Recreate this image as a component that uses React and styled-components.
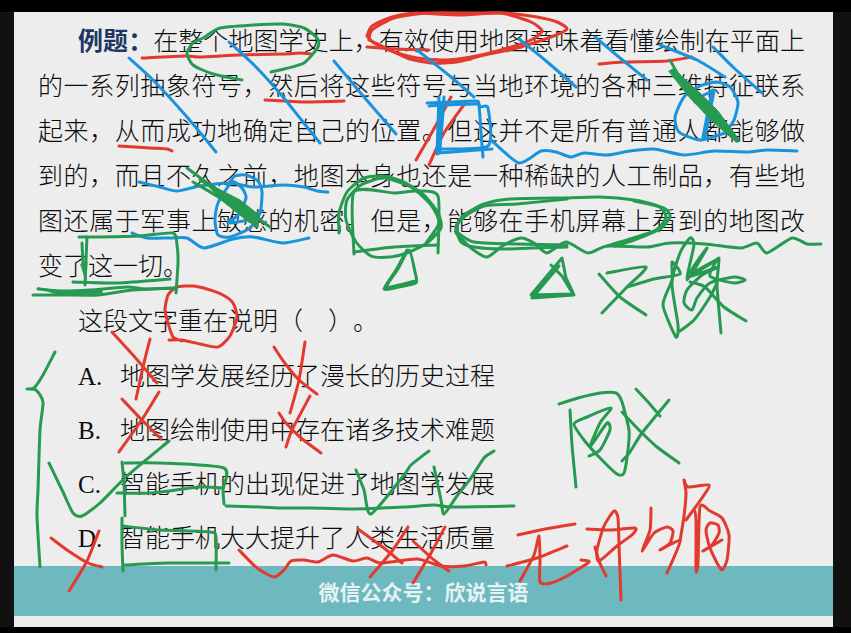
import React from "react";
import styled, { createGlobalStyle } from "styled-components";

const GlobalStyle = createGlobalStyle`
  * { box-sizing: border-box; }
  body { margin: 0; background: #000; }
`;

const Stage = styled.main`
  position: relative;
  display: flex;
  flex-direction: column;
  min-height: 100vh;
  padding: 12px 0 6px;
  background: #000;
`;

const Backdrop = styled.div`
  display: flex;
  flex: 1;
  padding: 0 18px 0 14px;
  background: #111;
`;

const Slide = styled.article`
  display: flex;
  flex: 1;
  flex-direction: column;
  padding-bottom: 11px;
  background: #ededed;
  color: #0c0c0c;
  font-family: "Liberation Serif", "Noto Sans CJK SC", serif;
  font-size: 25px;
  font-weight: 300;
  text-spacing-trim: space-all;
`;

const Content = styled.section`
  flex: 1;
  padding: 7px 28px 0 24px;
`;

const Passage = styled.p`
  margin: 0;
  line-height: 45px;
  text-align: justify;
  text-indent: 40px;
`;

const Lead = styled.strong`
  color: #1f3564;
  font-weight: 700;
`;

const Question = styled.p`
  margin: 6px 0 0;
  padding-left: 40px;
  line-height: 54px;
  white-space: pre;
`;

const Options = styled.ol`
  margin: 1px 0 0;
  padding: 0 0 0 40px;
  list-style: none;
`;

const Option = styled.li`
  display: grid;
  grid-template-columns: 42px 1fr;
  line-height: 54px;
`;

const Banner = styled.footer`
  padding: 0 16px;
  background: #6db9bf;
  color: #e4f2f3;
  font-family: "Noto Sans CJK SC", sans-serif;
  font-size: 21px;
  font-weight: 700;
  line-height: 50px;
  text-align: center;
`;

const Ink = styled.svg`
  position: absolute;
  inset: 0;
  width: 100%;
  height: 100%;
  pointer-events: none;
`;

const Pen = styled.g`
  fill: none;
  stroke: ${(p) => p.$color};
  stroke-width: 3;
  stroke-linecap: round;
  stroke-linejoin: round;
`;

const Marker = styled.path`
  stroke-width: 5;
`;

const Blot = styled.path`
  fill: ${(p) => p.$color};
  stroke-width: 1;
`;

const RED = "#e33a2f";
const BLUE = "#1893dc";
const GREEN = "#279a52";

const options = [
  ["A.", "地图学发展经历了漫长的历史过程"],
  ["B.", "地图绘制使用中存在诸多技术难题"],
  ["C.", "智能手机的出现促进了地图学发展"],
  ["D.", "智能手机大大提升了人类生活质量"],
];

/* Pen strokes as point lists; each is drawn as a smooth curve through its points. */
const redStrokes = [
  "142,58 185,56 200,57 240,55 283,54 300,53 311,54",
  "367,47 397,49 429,50",
  "367,36 371,27 384,20 400,15 417,13 461,15 501,13 531,22 542,31 531,40 501,50 471,57 444,60 417,58 394,52 374,43 367,36",
  "369,40 372,30 394,18 427,13 470,13 505,13 537,17 557,22 567,29 551,37 517,48 484,55 457,62 431,63 407,58 384,47 369,40",
  "426,59 448,61 471,59",
  "599,64 624,62 667,61 692,57",
  "265,100 284,101 304,102 344,101",
  "119,146 150,148 167,149 172,151",
  "451,97 435,127 416,160",
  "466,102 444,133 429,165",
  "169,340 182,340 200,344 218,347 230,336 237,317 233,303 223,295 207,289 193,286 177,287 168,295 165,310 168,323 173,337 182,341",
  "112,332 133,355 157,383",
  "150,339 143,367 136,399",
  "122,399 140,418 161,439",
  "159,392 143,418 119,452",
  "274,347 284,362 299,380 317,394",
  "305,342 299,380 290,413",
  "279,413 286,423 301,438 321,453",
  "310,396 292,430 286,447",
  "51,538 67,550 88,563 102,567",
  "99,531 87,561 69,591",
  "239,550 257,568 274,577 284,570 291,561 304,560 318,562 333,555 353,561 367,558 381,563 417,559 441,566 464,566 484,562 486,565",
  "358,529 384,548 402,563",
  "408,527 392,551 370,577",
  "413,541 434,560 449,571",
  "445,527 431,553 413,583",
  "518,535 545,529 575,524",
  "507,566 537,558 567,546",
  "520,581 534,555 539,536 540,560 540,582 551,583 567,576 589,562 581,560",
  "595,547 599,561 606,576",
  "587,529 610,530 635,528 633,534 617,546 599,561 597,550 604,526 614,511 618,518 619,545 621,600",
  "651,508 650,530 642,551 654,533 667,527 673,531 670,543 660,550 680,541 667,573",
  "680,541 684,516 686,493 684,480 688,487 709,485 702,498 686,520 694,510 696,520 696,570 698,563 700,507 710,511 722,518 729,535 727,560 722,570 717,563 709,545 706,530 710,523 718,525 719,533 712,545 703,551 722,540",
];

const blueStrokes = [
  "129,58 153,80 187,117 216,152",
  "229,42 256,67 283,97 303,122 320,143",
  "334,61 364,97 396,134",
  "417,50 451,77 474,97",
  "519,39 545,60 576,87",
  "595,37 620,58 647,80",
  "660,45 697,60 725,77",
  "713,47 734,68 762,93",
  "427,103 450,102 476,101 479,105 481,133 483,157",
  "439,97 438,125 437,154",
  "444,97 442,125 439,153",
  "429,106 445,105 477,104 480,107 488,108 488,146 437,149",
  "437,153 465,151 492,149",
  "491,140 519,163 541,151 556,152 571,157 584,153 607,155 630,151 654,149 684,155 714,151 747,152 767,150 797,151",
  "725,133 700,140 679,132 675,117 684,97 700,86 717,82 730,87 738,102 734,120 726,131",
  "695,102 704,95 713,91",
  "139,182 160,187 177,191 200,186 230,183 253,187 283,185 304,187 317,191 328,192",
  "230,182 235,176 246,175 258,181 262,192 260,213 250,228 230,237 218,235 215,220 218,203 232,182 242,188 246,198 238,215 228,223 247,220 258,213",
  "132,233 147,238 170,238 187,238 204,248 233,239 253,237 283,243 309,238",
];

const greenStrokes = [
  "242,80 213,74 193,65 187,53 193,43 203,38 220,28 253,25 283,24 304,28 317,38 318,47 304,63 284,69 271,72",
  "670,60 678,74 690,86",
  "187,168 213,187 257,215",
  "193,182 220,198 247,218",
  "200,180 235,202 270,227",
  "79,237 100,237 140,236 173,233 177,245 178,263 176,293",
  "87,237 86,260 85,285",
  "82,243 83,262 85,275",
  "73,282 117,283 170,279",
  "38,289 60,291 90,290 127,287 145,289 176,288",
  "33,295 65,295 98,295 133,290 176,288",
  "339,233 339,213 347,192 364,178 384,176 404,182 424,195 438,213 441,228 427,243 407,253 390,257 371,256 356,242 346,220 347,200 361,185 384,178 411,187 431,205 439,223 426,243",
  "354,254 354,192 394,193 416,191 438,196 438,253",
  "354,252 394,247 438,245",
  "407,250 396,270 384,289 399,287 416,283 415,272 409,250 398,269 387,287 415,281",
  "567,198 511,199 484,204 464,215 456,227 461,242 474,247 504,249 567,247",
  "567,199 517,204 484,206 463,218 456,230 474,242 517,244 567,245",
  "567,198 600,197 634,200 658,206 666,217 656,230 630,239 607,246",
  "634,201 664,208 670,217 660,229 634,240 615,246",
  "456,233 471,248 487,257 504,245 521,238 534,243 547,253 566,242 588,253 607,246 647,247 670,243 705,244 740,248 757,243 767,253 792,238 807,244 821,244",
  "607,273 646,267 627,287 602,313",
  "599,274 620,297 646,315",
  "627,287 654,279 680,274 672,262 672,280 663,305 676,337 678,325 672,283 680,253 690,238 694,245 687,280 707,248 690,273 718,259 691,276 718,267 702,275 687,290 684,303 692,310 697,298 710,283 734,277 745,280 734,283 710,276 719,258 717,285 721,333",
  "690,282 705,287 724,307 746,321",
  "717,283 710,297 694,320 680,331",
  "559,404 578,398 600,393 616,393 622,402 629,430 628,450 624,473 617,474 600,458 584,440 574,424 587,417 611,408 600,423 590,447 607,423 610,430 600,450 589,456",
  "570,410 572,445 576,487",
  "636,389 648,402 660,416",
  "669,400 642,433 630,452 622,461",
  "622,412 640,431 657,447 679,463",
  "55,352 43,375 34,388 27,389 36,390 43,402 40,430 38,490 37,516 40,567",
  "49,463 62,490 73,513 82,516 100,503 127,476 169,441",
  "125,463 160,463 224,468 223,490 224,504",
  "122,462 124,483 125,516",
  "117,493 150,493 200,487 223,488",
  "226,506 260,507 283,508 311,508 350,509 404,507 434,505 451,507 514,506",
  "434,467 441,500 444,514 457,496 471,478 484,458 494,451",
  "356,470 364,490 371,514 404,475 411,465 429,451",
  "122,518 122,545 123,571",
  "123,526 160,530 210,532 216,537 216,570",
  "125,565 167,563 229,563",
];

function smooth(points) {
  const p = points.split(" ").map((pair) => pair.split(",").map(Number));
  let d = `M${p[0]}`;
  for (let i = 0; i < p.length - 1; i += 1) {
    const before = p[i - 1] || p[i];
    const from = p[i];
    const to = p[i + 1];
    const after = p[i + 2] || to;
    const c1 = from.map((v, k) => v + (to[k] - before[k]) / 9);
    const c2 = to.map((v, k) => v - (after[k] - from[k]) / 9);
    d += `C${c1} ${c2} ${to}`;
  }
  return d;
}

function Strokes({ color, list, children }) {
  return (
    <Pen $color={color}>
      {list.map((points) => (
        <path key={points} d={smooth(points)} />
      ))}
      {children}
    </Pen>
  );
}

export default function App() {
  return (
    <Stage lang="zh-CN">
      <GlobalStyle />
      <Backdrop>
        <Slide>
          <Content>
            <Passage>
              <Lead>例题：</Lead>
              在整个地图学史上，有效使用地图意味着看懂绘制在平面上的一系列抽象符号，然后将这些符号与当地环境的各种三维特征联系起来，从而成功地确定自己的位置。但这并不是所有普通人都能够做到的，而且不久之前，地图本身也还是一种稀缺的人工制品，有些地图还属于军事上敏感的机密。但是，能够在手机屏幕上看到的地图改变了这一切。
            </Passage>
            <Question>这段文字重在说明（　）。</Question>
            <Options>
              {options.map(([label, text]) => (
                <Option key={label}>
                  <span>{label}</span>
                  <span>{text}</span>
                </Option>
              ))}
            </Options>
          </Content>
          <Banner>微信公众号：欣说言语</Banner>
        </Slide>
      </Backdrop>
      <Ink viewBox="0 0 851 633" preserveAspectRatio="xMidYMin meet" aria-hidden="true">
        <Strokes color={RED} list={redStrokes} />
        <Strokes color={BLUE} list={blueStrokes}>
          <Marker d="M713 91L704 137" />
          <Marker d="M440 104L439 152" />
        </Strokes>
        <Strokes color={GREEN} list={greenStrokes}>
          <Blot $color={GREEN} d="M669 71L673 69L700 93L718 111L740 141L736 142L712 121L690 98Z" />
          <Blot $color={GREEN} d="M203 181L215 187L240 200L259 215L258 228L245 219L225 203Z" />
          <Blot $color={GREEN} d="M81 264L87 262L86 280Z" />
          <Blot $color={GREEN} d="M38 288L60 291L102 290L102 293L60 295Z" />
          <path d="M531 295L562 258L566 278L574 295L532 298L559 266M551 265L562 276L573 294M531 295L572 294" />
        </Strokes>
      </Ink>
    </Stage>
  );
}
